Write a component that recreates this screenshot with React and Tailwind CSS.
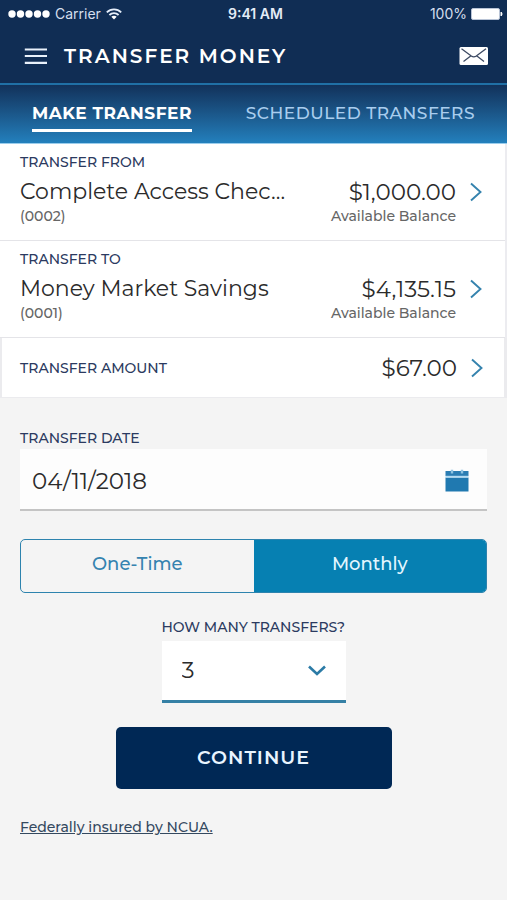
import React, { useState } from "react";

const accounts = [
  {
    label: "Transfer From",
    name: "Complete Access Chec...",
    number: "(0002)",
    balance: "$1,000.00",
  },
  {
    label: "Transfer To",
    name: "Money Market Savings",
    number: "(0001)",
    balance: "$4,135.15",
  },
];

const tabs = ["Make Transfer", "Scheduled Transfers"];
const frequencies = ["One-Time", "Monthly"];

function ChevronRight() {
  return (
    <svg width="12" height="20" viewBox="0 0 12 20" fill="none" className="shrink-0">
      <path d="M1 1.5L10.5 10L1 18.5" stroke="#3583ae" strokeWidth="1.9" />
    </svg>
  );
}

function StatusBar() {
  return (
    <div className="grid h-7 grid-cols-3 items-center pr-1 pl-2 font-['Inter',sans-serif] text-sm leading-5">
      <div className="flex items-center gap-[5px] text-[#d5dfee]">
        <svg width="42" height="8" viewBox="0 0 42 8" fill="#fff">
          <circle cx="4" cy="4" r="3.7" />
          <circle cx="12.5" cy="4" r="3.7" />
          <circle cx="21" cy="4" r="3.7" />
          <circle cx="29.5" cy="4" r="3.7" />
          <circle cx="38" cy="4" r="3.7" />
        </svg>
        <span>Carrier</span>
        <svg width="16" height="12" viewBox="0 0 16 12" fill="none" stroke="#e6eefa" strokeWidth="1.8">
          <path d="M0.8 4.4C4.9 0.4 11.1 0.4 15.2 4.4" />
          <path d="M3.4 7C6 4.5 10 4.5 12.6 7" />
          <path d="M5.3 8.8C6.8 7.4 9.2 7.4 10.7 8.8L8 11.6Z" fill="#fff" stroke="none" />
        </svg>
      </div>
      <div className="text-center font-semibold text-[#e3ebf6]">9:41 AM</div>
      <div className="flex items-center justify-end gap-1 text-[#d5dfee]">
        <span>100%</span>
        <svg width="32" height="12" viewBox="0 0 32 12">
          <rect x="0.5" y="0.5" width="28" height="11" rx="1.5" fill="#fff" stroke="#b9c4d6" />
          <path d="M30 4C31.3 4.4 31.3 7.6 30 8Z" fill="#fff" stroke="#fff" />
        </svg>
      </div>
    </div>
  );
}

function Header() {
  return (
    <header className="bg-[#102d54] text-white">
      <StatusBar />
      <div className="flex h-[57px] items-center justify-between border-b-2 border-[#2070a6] pt-px pr-[18px] pl-6">
        <div className="flex items-center gap-4">
          <button type="button" aria-label="Menu">
            <svg width="24" height="18" viewBox="0 0 24 18" stroke="#e9f1fb" strokeWidth="2.2">
              <path d="M0.8 2.5H23M0.8 9H23M0.8 15.8H23" />
            </svg>
          </button>
          <h1 className="text-[20px] leading-7 font-semibold tracking-[2px] uppercase">
            Transfer Money
          </h1>
        </div>
        <button type="button" aria-label="Messages">
          <svg width="30" height="20" viewBox="0 0 30 20" fill="none">
            <rect x="0.5" y="1" width="28.5" height="18" rx="1.5" fill="#fff" />
            <path
              d="M2.5 2.8L12.3 10Q14.8 11.6 17.3 10L27 2.8M4.5 15.5L12 9.8M25 15.5L17.6 9.8"
              stroke="#3d4a63"
              strokeWidth="1.3"
            />
          </svg>
        </button>
      </div>
    </header>
  );
}

function Tabs({ active, onChange }) {
  return (
    <nav className="flex h-[59px] items-center justify-between border-b border-[#9bcdec] bg-linear-to-b from-[#12325b] to-[#2380bd] px-8">
      {tabs.map((tab) => (
        <button
          key={tab}
          type="button"
          aria-current={active === tab ? "page" : undefined}
          onClick={() => onChange(tab)}
          className={
            active === tab
              ? "border-b-3 border-white pt-1 pb-1 text-[17px] leading-6 font-bold tracking-[0.5px] text-white uppercase"
              : "border-b-3 border-transparent pt-1 pb-1 text-[17px] leading-6 font-medium tracking-[0.5px] text-[#a9cdee] uppercase"
          }
        >
          {tab}
        </button>
      ))}
    </nav>
  );
}

function AccountRow({ label, name, number, balance }) {
  return (
    <button
      type="button"
      className="block w-full border-b border-[#e4e4e8] pt-2 pr-[23px] pb-4 pl-5 text-left"
    >
      <span className="block text-sm leading-5 font-medium text-[#2b3a60] uppercase">{label}</span>
      <span className="mt-1 flex items-center justify-between text-[22px] leading-8 text-[#2b2b2b]">
        <span>{name}</span>
        <span className="flex items-center gap-[14px] text-[23px]">
          {balance}
          <ChevronRight />
        </span>
      </span>
      <span className="flex justify-between pr-[26px] text-sm leading-4 font-medium text-[#666]">
        <span>{number}</span>
        <span>Available Balance</span>
      </span>
    </button>
  );
}

export default function App() {
  const [tab, setTab] = useState("Make Transfer");
  const [date, setDate] = useState("04/11/2018");
  const [frequency, setFrequency] = useState("Monthly");
  const [count, setCount] = useState("3");

  return (
    <div className="min-h-screen bg-[#f4f4f4] font-['Montserrat','Inter',sans-serif]">
      <Header />
      <Tabs active={tab} onChange={setTab} />

      <main>
        <section className="border-r-2 border-[#ececf0] bg-white">
          {accounts.map((account) => (
            <AccountRow key={account.label} {...account} />
          ))}
        </section>
        <button
          type="button"
          className="flex h-[60px] w-full items-center justify-between border-r-3 border-l-2 border-b border-[#ebebee] bg-white pr-[21px] pl-[18px]"
        >
          <span className="text-sm leading-5 font-medium text-[#2b3a60] uppercase">Transfer Amount</span>
          <span className="flex items-center gap-[14px] text-[23px] leading-8 text-[#2b2b2b]">
            $67.00
            <ChevronRight />
          </span>
        </button>

        <form className="px-5 pt-[30px]" onSubmit={(e) => e.preventDefault()}>
          <label htmlFor="date" className="block text-sm leading-5 font-medium text-[#2b3a60] uppercase">
            Transfer Date
          </label>
          <div className="mt-px flex h-[62px] items-center border-b-2 border-[#c4c4c4] bg-[#fdfdfd] pt-1 pr-[18px] pl-3">
            <input
              id="date"
              type="text"
              value={date}
              onChange={(e) => setDate(e.target.value)}
              className="min-w-0 flex-1 bg-transparent text-[23px] leading-8 text-[#2b2b2b] outline-none"
            />
            <button type="button" aria-label="Pick a date">
              <svg width="24" height="24" viewBox="0 0 24 24">
                <path d="M0.5 2H23.5V7H0.5Z" fill="#2a7db3" />
                <path d="M0.5 8.5H23.5V22.5H0.5Z" fill="#2079b0" />
                <path d="M0.5 6.8H23.5V8.6H0.5Z" fill="#b5dcf3" />
                <path d="M7 0.8V4.5M17 0.8V4.5" stroke="#8fc3e2" strokeWidth="2.4" />
              </svg>
            </button>
          </div>

          <div
            role="group"
            aria-label="Frequency"
            className="mt-7 grid h-[54px] grid-cols-2 overflow-hidden rounded-[5px] border border-[#2d83ae]"
          >
            {frequencies.map((item) => (
              <button
                key={item}
                type="button"
                aria-pressed={frequency === item}
                onClick={() => setFrequency(item)}
                className={
                  frequency === item
                    ? "bg-[#0680b2] pb-1 text-[18px] leading-6 font-medium text-[#e3f6ff]"
                    : "pb-1 text-[18px] leading-6 font-medium text-[#3583b0]"
                }
              >
                {item}
              </button>
            ))}
          </div>

          <div className="mx-auto mt-6 w-[184px]">
            <label
              htmlFor="count"
              className="block text-sm leading-5 font-medium whitespace-nowrap text-[#2b3a60] uppercase"
            >
              How many transfers?
            </label>
            <div className="relative mt-1">
              <select
                id="count"
                value={count}
                onChange={(e) => setCount(e.target.value)}
                className="h-[62px] w-full appearance-none border-b-3 border-[#3580a5] bg-white px-5 text-[23px] text-[#2b2b2b] outline-none"
              >
                {["1", "2", "3", "4", "5", "6"].map((n) => (
                  <option key={n}>{n}</option>
                ))}
              </select>
              <svg
                width="18"
                height="12"
                viewBox="0 0 18 12"
                fill="none"
                className="pointer-events-none absolute top-6 right-5"
              >
                <path d="M1 1.5L9 9L17 1.5" stroke="#2b7ba6" strokeWidth="2.6" />
              </svg>
            </div>
          </div>

          <button
            type="submit"
            className="mx-auto mt-6 block h-[62px] w-[276px] rounded-[5px] bg-[#002855] text-[19px] leading-6 font-semibold tracking-[1px] text-[#e9f5ff] uppercase"
          >
            Continue
          </button>
        </form>

        <footer className="px-5 pt-[26px] pb-6">
          <a href="#ncua" className="text-sm leading-5 font-medium text-[#34495f] underline">
            Federally insured by NCUA.
          </a>
        </footer>
      </main>
    </div>
  );
}
